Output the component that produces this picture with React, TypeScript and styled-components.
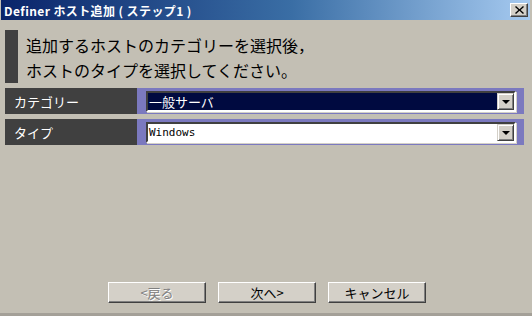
import styled, { createGlobalStyle } from "styled-components";

const GlobalStyle = createGlobalStyle`
  html, body {
    margin: 0;
    padding: 0;
    background: #c3bfb4;
  }
  * {
    box-sizing: border-box;
  }
`;

const JP = `"Noto Sans CJK JP", "Liberation Sans", sans-serif`;

const App = () => {
  return (
    <Window>
      <GlobalStyle />
      <TitleBar>
        <Title>Definer ホスト追加 ( ステップ1 )</Title>
        <CloseButton aria-label="閉じる">
          <svg width="9" height="8" viewBox="0 0 9 8">
            <path d="M1 0 L4.5 3.2 L8 0 L9 1 L5.6 4 L9 7 L8 8 L4.5 4.8 L1 8 L0 7 L3.4 4 L0 1 Z" fill="#000" />
          </svg>
        </CloseButton>
      </TitleBar>

      <Body>
        <Header>
          <HeaderBar />
          <HeaderText>
            追加するホストのカテゴリーを選択後，
            <br />
            ホストのタイプを選択してください。
          </HeaderText>
        </Header>

        <Rows>
          <Row>
            <Label>カテゴリー</Label>
            <Cell>
              <Select $active>
                <SelectText $active>一般サーバ</SelectText>
                <DropButton>
                  <Arrow />
                </DropButton>
              </Select>
            </Cell>
          </Row>
          <Row>
            <Label>タイプ</Label>
            <Cell>
              <Select>
                <SelectText $mono>Windows</SelectText>
                <DropButton>
                  <Arrow />
                </DropButton>
              </Select>
            </Cell>
          </Row>
        </Rows>
      </Body>

      <Footer>
        <Button disabled>&lt;戻る</Button>
        <Button>次へ&gt;</Button>
        <Button>キャンセル</Button>
      </Footer>
    </Window>
  );
};

const Window = styled.div`
  width: 532px;
  height: 316px;
  display: flex;
  flex-direction: column;
  background: #c3bfb4;
  border-bottom: 3px solid #a4a098;
  font-family: ${JP};
`;

const TitleBar = styled.div`
  height: 20px;
  margin: 0 2px 0 1px;
  padding: 0 2px 0 3px;
  display: flex;
  align-items: center;
  justify-content: space-between;
  background: linear-gradient(to right, #0a246a 0%, #3a6ea5 55%, #a6caf0 100%);
`;

const Title = styled.div`
  color: #fff;
  font-size: 12px;
  font-weight: bold;
  letter-spacing: 0.4px;
  white-space: pre;
`;

const CloseButton = styled.div`
  width: 18px;
  height: 14px;
  display: flex;
  align-items: center;
  justify-content: center;
  background: #d4d0c8;
  border-top: 1px solid #fff;
  border-left: 1px solid #fff;
  border-right: 1px solid #404040;
  border-bottom: 1px solid #404040;
  box-shadow: inset -1px -1px 0 #808080;
`;

const Body = styled.div`
  flex: 1;
  padding: 10px 8px 0 5px;
  display: flex;
  flex-direction: column;
`;

const Header = styled.div`
  display: flex;
  gap: 8px;
  height: 53px;
`;

const HeaderBar = styled.div`
  width: 13px;
  background: #404040;
`;

const HeaderText = styled.div`
  font-size: 16px;
  line-height: 25px;
  color: #000;
  padding-top: 3px;
`;

const Rows = styled.div`
  margin-top: 5px;
  display: flex;
  flex-direction: column;
  gap: 5px;
`;

const Row = styled.div`
  display: flex;
  height: 26px;
`;

const Label = styled.div`
  width: 132px;
  background: #404040;
  color: #fff;
  font-size: 13px;
  display: flex;
  align-items: center;
  padding-left: 9px;
`;

const Cell = styled.div`
  flex: 1;
  background: #7b79bf;
  display: flex;
  align-items: center;
  padding: 0 8px 0 9px;
`;

const Select = styled.div<{ $active?: boolean }>`
  flex: 1;
  height: 21px;
  display: flex;
  align-items: center;
  justify-content: space-between;
  background: ${(p) => (p.$active ? "#000a40" : "#fff")};
  border-top: 2px solid #404040;
  border-left: 2px solid #404040;
  border-right: 2px solid #fff;
  border-bottom: 2px solid #fff;
  box-shadow: 1px 1px 0 #d4d0c8;
`;

const SelectText = styled.span<{ $active?: boolean; $mono?: boolean }>`
  color: ${(p) => (p.$active ? "#fff" : "#000")};
  font-family: ${(p) => (p.$mono ? `"DejaVu Sans Mono", monospace` : JP)};
  font-size: ${(p) => (p.$mono ? "11px" : "13px")};
  padding-left: 1px;
  line-height: 17px;
`;

const DropButton = styled.div`
  width: 17px;
  height: 17px;
  background: #d4d0c8;
  border-top: 1px solid #d4d0c8;
  border-left: 1px solid #d4d0c8;
  border-right: 1px solid #404040;
  border-bottom: 1px solid #404040;
  box-shadow: inset 1px 1px 0 #fff, inset -1px -1px 0 #808080;
  display: flex;
  align-items: center;
  justify-content: center;
`;

const Arrow = styled.div`
  width: 0;
  height: 0;
  border-left: 4px solid transparent;
  border-right: 4px solid transparent;
  border-top: 4px solid #000;
  margin-top: 1px;
`;

const Footer = styled.div`
  display: flex;
  justify-content: center;
  gap: 12px;
  padding: 0 0 10px 2px;
`;

const Button = styled.button`
  width: 98px;
  height: 21px;
  padding: 0;
  font-family: ${JP};
  font-size: 13px;
  color: #000;
  background: #d4d0c8;
  border-top: 1px solid #fff;
  border-left: 1px solid #fff;
  border-right: 1px solid #404040;
  border-bottom: 1px solid #404040;
  box-shadow: inset -1px -1px 0 #808080;
  display: flex;
  align-items: center;
  justify-content: center;

  &:disabled {
    color: #808080;
    text-shadow: 1px 1px 0 #fff;
  }
`;

export default App;
